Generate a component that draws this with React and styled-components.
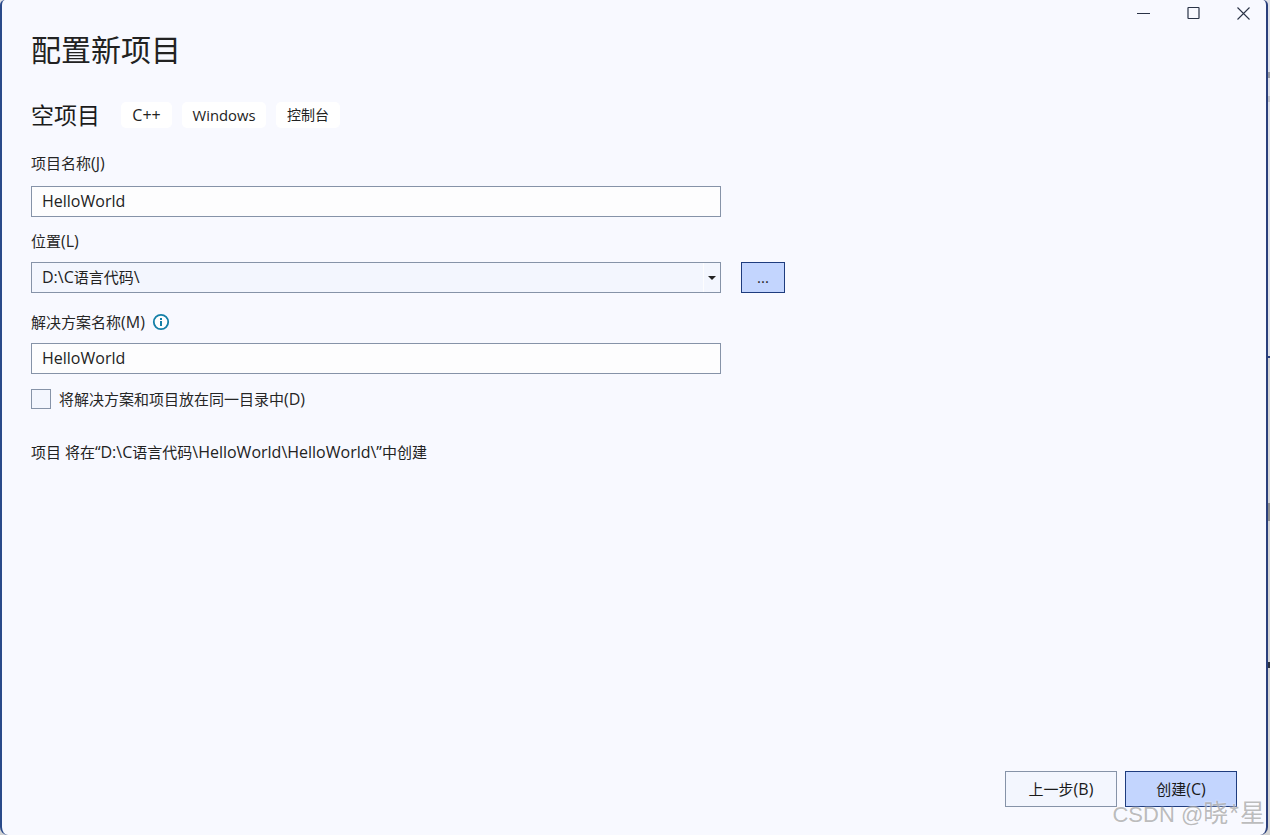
import React from "react";
import styled, { createGlobalStyle } from "styled-components";

const CJK = `"Noto Sans CJK SC", "Noto Sans", sans-serif`;
const UI = `"Open Sans", "Noto Sans CJK SC", sans-serif`;

const Global = createGlobalStyle`
  html, body { margin: 0; padding: 0; height: 100%; background: #e4e4e4; overflow: hidden; }
  #root { height: 100%; }
  * { box-sizing: border-box; }
`;

const Page = styled.div`
  width: 1270px;
  height: 835px;
  display: flex;
  background: linear-gradient(
    to bottom,
    #dfe1e8 0 72px,
    #9a9ca4 72px 78px,
    #dfe1e8 78px 96px,
    #c4c5ca 96px 102px,
    #dfe1e8 102px 356px,
    #2a3f7c 356px 358px,
    #d4d4d4 358px 503px,
    #8e8e8e 503px 521px,
    #d4d4d4 521px 662px,
    #2a3040 662px 668px,
    #d4d4d4 668px
  );
`;

const Win = styled.div`
  width: 1268px;
  height: 835px;
  background: #f8f9ff;
  border-left: 2px solid #2a4a8a;
  border-right: 2px solid #2a3f7c;
  border-radius: 5px 5px 8px 8px;
  display: flex;
  flex-direction: column;
  font-family: ${UI};
  font-size: 15px;
  line-height: 20px;
  color: #1f1f1f;
  position: relative;
`;

const Lat = styled.span`
  font-size: 16px;
`;

const WinControls = styled.div`
  display: flex;
  justify-content: flex-end;
  height: 26px;
  padding-right: 15px;
  gap: 35px;
  align-items: center;
`;

const Ctl = styled.svg`
  width: 15px;
  height: 15px;
  display: block;
`;

const Body = styled.div`
  flex: 1;
  display: flex;
  flex-direction: column;
  padding: 0 0 0 29px;
`;

const Title = styled.h1`
  margin: 0;
  font: 400 30px/44px ${CJK};
  color: #222;
`;

const SubRow = styled.div`
  display: flex;
  align-items: center;
  margin-top: 30px;
  height: 28px;
`;

const SubTitle = styled.h2`
  margin: 0 21px 0 0;
  font: 400 23px/28px ${CJK};
  color: #1b1b1b;
`;

const Tag = styled.span`
  background: #fff;
  border-radius: 5px;
  width: ${(p) => p.$w}px;
  height: 26px;
  margin: 2px 10px 0 0;
  display: flex;
  align-items: center;
  justify-content: center;
  font-size: ${(p) => p.$size}px;
  color: #222;
`;

const Label = styled.label`
  display: flex;
  align-items: center;
  gap: 7px;
  height: 20px;
  color: #262626;
  margin-top: ${(p) => p.$mt}px;
`;

const Field = styled.div`
  width: 690px;
  height: 31px;
  margin-top: ${(p) => p.$mt}px;
  background: #fdfdfe;
  border: 1px solid #8693a8;
  padding: 0 10px 2px;
  display: flex;
  align-items: center;
  font-size: 16px;
  color: #222;
`;

const LocRow = styled.div`
  display: flex;
  align-items: center;
  margin-top: ${(p) => p.$mt}px;
`;

const Combo = styled.div`
  width: 690px;
  height: 31px;
  background: #f3f6fe;
  border: 1px solid #8693a8;
  display: flex;
  align-items: stretch;
  color: #222;
`;

const ComboText = styled.div`
  flex: 1;
  padding: 0 10px 2px;
  display: flex;
  align-items: center;
  border-right: 1px solid #fdfdfe;
`;

const ComboArrow = styled.div`
  width: 16px;
  display: flex;
  align-items: center;
  justify-content: center;
  &::after {
    content: "";
    border-left: 4px solid transparent;
    border-right: 4px solid transparent;
    border-top: 4px solid #222;
  }
`;

const Browse = styled.button`
  width: 44px;
  height: 31px;
  margin-left: 20px;
  background: #c3d5fe;
  border: 1px solid #1e3c7e;
  border-radius: 0;
  font: 400 15px/1 ${UI};
  color: #222;
  padding: 0;
`;

const CheckRow = styled.div`
  display: flex;
  align-items: center;
  margin-top: 15px;
  height: 20px;
  color: #262626;
`;

const Check = styled.span`
  width: 20px;
  height: 20px;
  background: #f3f6fe;
  border: 1px solid #8693a8;
  margin-right: 8px;
`;

const Note = styled.div`
  margin-top: 33px;
  color: #222;
`;

const Spacer = styled.div`
  flex: 1;
`;

const Footer = styled.div`
  display: flex;
  justify-content: flex-end;
  gap: 8px;
  padding: 0 29px 28px 0;
`;

const FootBtn = styled.button`
  width: 112px;
  height: 36px;
  padding: 0;
  border-radius: 0;
  border: 1px solid ${(p) => (p.$primary ? "#1e3c7e" : "#8693a8")};
  background: ${(p) => (p.$primary ? "#c3d5fe" : "#f3f6fe")};
  font: 400 15px/1 ${UI};
  color: #1a1a1a;
`;

const Watermark = styled.div`
  position: absolute;
  right: 0;
  bottom: 6px;
  font: 400 22px/28px "Liberation Sans", "Noto Sans CJK SC", sans-serif;
  color: rgba(150, 150, 150, 0.65);
  text-shadow: 0 0 2px rgba(255, 255, 255, 0.8);
  white-space: nowrap;
`;

const WatermarkName = styled.span`
  font-size: 25px;
  letter-spacing: 1px;
`;

const Info = () => (
  <svg width="18" height="18" viewBox="0 0 18 18" aria-hidden="true">
    <circle cx="9" cy="9" r="7.2" fill="#fff" stroke="#1580a8" strokeWidth="1.8" />
    <rect x="8" y="8" width="2" height="5" fill="#1580a8" />
    <rect x="8" y="5" width="2" height="2" fill="#1580a8" />
  </svg>
);

export default function App() {
  return (
    <Page>
      <Global />
      <Win>
        <WinControls>
          <Ctl viewBox="0 0 15 15">
            <path d="M1 7.5H14" stroke="#2a3346" strokeWidth="1" />
          </Ctl>
          <Ctl viewBox="0 0 15 15">
            <rect x="2" y="1.5" width="11" height="11" fill="none" stroke="#2a3346" strokeWidth="1.2" rx="0.5" />
          </Ctl>
          <Ctl viewBox="0 0 15 15">
            <path d="M1.5 1.5L13.5 13.5M13.5 1.5L1.5 13.5" stroke="#2a3346" strokeWidth="1.1" />
          </Ctl>
        </WinControls>
        <Body>
          <Title>配置新项目</Title>
          <SubRow>
            <SubTitle>空项目</SubTitle>
            <Tag $w={51} $size={16}>C++</Tag>
            <Tag $w={84} $size={14.8}>Windows</Tag>
            <Tag $w={64} $size={14}>控制台</Tag>
          </SubRow>
          <Label $mt={25}>
            <span>项目名称<Lat>(J)</Lat></span>
          </Label>
          <Field $mt={13}>HelloWorld</Field>
          <Label $mt={14}>
            <span>位置<Lat>(L)</Lat></span>
          </Label>
          <LocRow $mt={11}>
            <Combo>
              <ComboText>
                <span><Lat>D:\C</Lat>语言代码<Lat>\</Lat></span>
              </ComboText>
              <ComboArrow />
            </Combo>
            <Browse>...</Browse>
          </LocRow>
          <Label $mt={19}>
            <span>解决方案名称<Lat>(M)</Lat></span>
            <Info />
          </Label>
          <Field $mt={11}>HelloWorld</Field>
          <CheckRow>
            <Check />
            <span>将解决方案和项目放在同一目录中<Lat>(D)</Lat></span>
          </CheckRow>
          <Note>
            项目 将在<Lat>“D:\C</Lat>语言代码<Lat>\HelloWorld\HelloWorld\”</Lat>中创建
          </Note>
          <Spacer />
          <Footer>
            <FootBtn>上一步<Lat>(B)</Lat></FootBtn>
            <FootBtn $primary>创建<Lat>(C)</Lat></FootBtn>
          </Footer>
        </Body>
        <Watermark>
          CSDN @<WatermarkName>晓*星</WatermarkName>
        </Watermark>
      </Win>
    </Page>
  );
}
